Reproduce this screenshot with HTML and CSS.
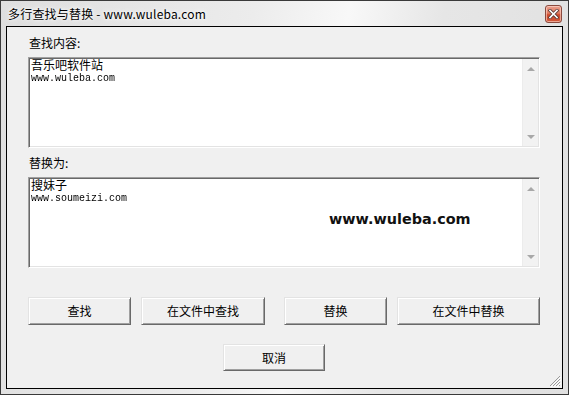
FILE: index.html
```html
<!DOCTYPE html>
<html lang="zh-CN">
<head>
<meta charset="utf-8">
<title>多行查找与替换</title>
<link rel="stylesheet" href="styles.css">
</head>
<body>
<div class="window">
  <div class="titlebar">
    <span class="title">多行查找与替换 - www.wuleba.com</span>
    <div class="close">
      <svg width="11" height="10" viewBox="0 0 11 10">
        <path d="M2 1.5 L9 8.5 M9 1.5 L2 8.5" stroke="#5a3a36" stroke-width="3.2" stroke-linecap="square" fill="none"/>
        <path d="M2 1.5 L9 8.5 M9 1.5 L2 8.5" stroke="#ffffff" stroke-width="1.6" stroke-linecap="square" fill="none"/>
      </svg>
    </div>
  </div>
  <div class="client">
    <div class="label">查找内容:</div>
    <div class="edit">
      <div class="edit-text">
        <div class="line-cjk">吾乐吧软件站</div>
        <div class="line-mono">www.wuleba.com</div>
      </div>
      <div class="vscroll">
        <span class="arrow up"></span>
        <span class="arrow down"></span>
      </div>
    </div>
    <div class="label label-2">替换为:</div>
    <div class="edit">
      <div class="edit-text">
        <div class="line-cjk">搜妹子</div>
        <div class="line-mono">www.soumeizi.com</div>
      </div>
      <div class="vscroll">
        <span class="arrow up"></span>
        <span class="arrow down"></span>
      </div>
      <div class="watermark">www.wuleba.com</div>
    </div>
    <div class="buttons">
      <div class="btn btn-find">查找</div>
      <div class="btn btn-findfile">在文件中查找</div>
      <div class="btn btn-replace">替换</div>
      <div class="btn btn-replacefile">在文件中替换</div>
    </div>
    <div class="btn btn-cancel">取消</div>
    <svg class="grip" width="13" height="13" viewBox="0 0 13 13">
      <path d="M12 2 L2 12 M12 5 L5 12 M12 8 L8 12 M12 11 L11 12" stroke="#9a9a9a" stroke-width="1" fill="none"/>
      <path d="M13 3 L3 13 M13 6 L6 13 M13 9 L9 13" stroke="#ffffff" stroke-width="1" fill="none"/>
    </svg>
  </div>
</div>
</body>
</html>
```
FILE: styles.css
```css
* { box-sizing: border-box; }
html, body { margin: 0; padding: 0; }
body {
  width: 569px;
  height: 395px;
  overflow: hidden;
  font-family: "Noto Sans CJK SC", "DejaVu Sans", sans-serif;
  font-size: 12px;
  color: #000;
}
.window {
  width: 569px;
  height: 395px;
  border: 1px solid #3a3a3a;
  background: linear-gradient(100deg, #dedede 0%, #ececec 40%, #f8f8f8 55%, #e6e6e6 70%, #e0e0e0 100%);
  display: flex;
  flex-direction: column;
  padding: 0 5px 5px 5px;
}
.titlebar {
  height: 25px;
  flex: none;
  display: flex;
  align-items: center;
  position: relative;
  padding-left: 2px;
}
.title {
  font-size: 12px;
  line-height: 14px;
  color: #000;
  letter-spacing: 0.2px;
  text-shadow: 0 0 6px #ffffff, 0 0 3px #ffffff;
  padding-top: 1px;
}
.close {
  position: absolute;
  right: 1px;
  top: 4px;
  width: 17px;
  height: 18px;
  border: 1px solid #8a4a3e;
  border-radius: 3px;
  background: linear-gradient(#eaa08e 0%, #e07a60 45%, #cc4a2c 55%, #d0573a 100%);
  box-shadow: inset 0 0 0 1px rgba(255,220,210,0.6);
  display: flex;
  align-items: center;
  justify-content: center;
}
.client {
  flex: 1;
  border: 1px solid #000;
  background: #f0f0f0;
  padding: 9px 0 0 21px;
  position: relative;
}
.label {
  height: 14px;
  line-height: 14px;
  margin-left: 1px;
  margin-bottom: 7px;
}
.label-2 { margin-top: 8px; }
.edit {
  width: 512px;
  height: 91px;
  position: relative;
  display: flex;
  background: #fff;
  border-top: 1px solid #a0a0a0;
  border-left: 1px solid #a0a0a0;
  border-right: 1px solid #ffffff;
  border-bottom: 1px solid #ffffff;
  box-shadow: inset 1px 1px 0 #696969, inset -1px -1px 0 #e3e3e3;
  padding: 1px;
}
.edit-text {
  flex: 1;
  padding: 0 0 0 1px;
}
.line-cjk {
  font-family: "Noto Sans CJK SC", sans-serif;
  font-size: 12px;
  line-height: 11px;
  height: 11px;
  color: #000;
}
.line-mono {
  font-family: "Liberation Mono", monospace;
  font-size: 10px;
  line-height: 10px;
  margin-top: 4px;
  color: #000;
  -webkit-font-smoothing: antialiased;
  will-change: transform;
}
.vscroll {
  width: 16px;
  flex: none;
  background: #f2f2f2;
  border-left: 1px solid #ececec;
  position: relative;
}
.arrow {
  position: absolute;
  left: 4px;
  width: 0;
  height: 0;
  border-left: 4px solid transparent;
  border-right: 4px solid transparent;
}
.arrow.up {
  top: 8px;
  border-bottom: 4px solid #a8a8a8;
}
.arrow.down {
  bottom: 7px;
  border-top: 4px solid #a8a8a8;
}
.watermark {
  position: absolute;
  left: 300px;
  top: 33px;
  font-family: "DejaVu Sans", sans-serif;
  font-weight: bold;
  font-size: 14.4px;
  line-height: 16px;
  color: #111;
}
.buttons {
  display: flex;
  margin-top: 29px;
  height: 28px;
}
.btn {
  height: 28px;
  display: flex;
  align-items: center;
  justify-content: center;
  background: #f0f0f0;
  border-top: 1px solid #e3e3e3;
  border-left: 1px solid #e3e3e3;
  border-right: 1px solid #696969;
  border-bottom: 1px solid #696969;
  box-shadow: inset 1px 1px 0 #ffffff, inset -1px -1px 0 #a0a0a0;
  font-size: 12px;
  line-height: 14px;
}
.btn-find { width: 103px; }
.btn-findfile { width: 124px; margin-left: 10px; }
.btn-replace { width: 103px; margin-left: 19px; }
.btn-replacefile { width: 143px; margin-left: 10px; }
.btn-cancel {
  width: 102px;
  height: 27px;
  margin-top: 19px;
  margin-left: 195px;
}
.grip {
  position: absolute;
  right: 1px;
  bottom: 1px;
}
```
